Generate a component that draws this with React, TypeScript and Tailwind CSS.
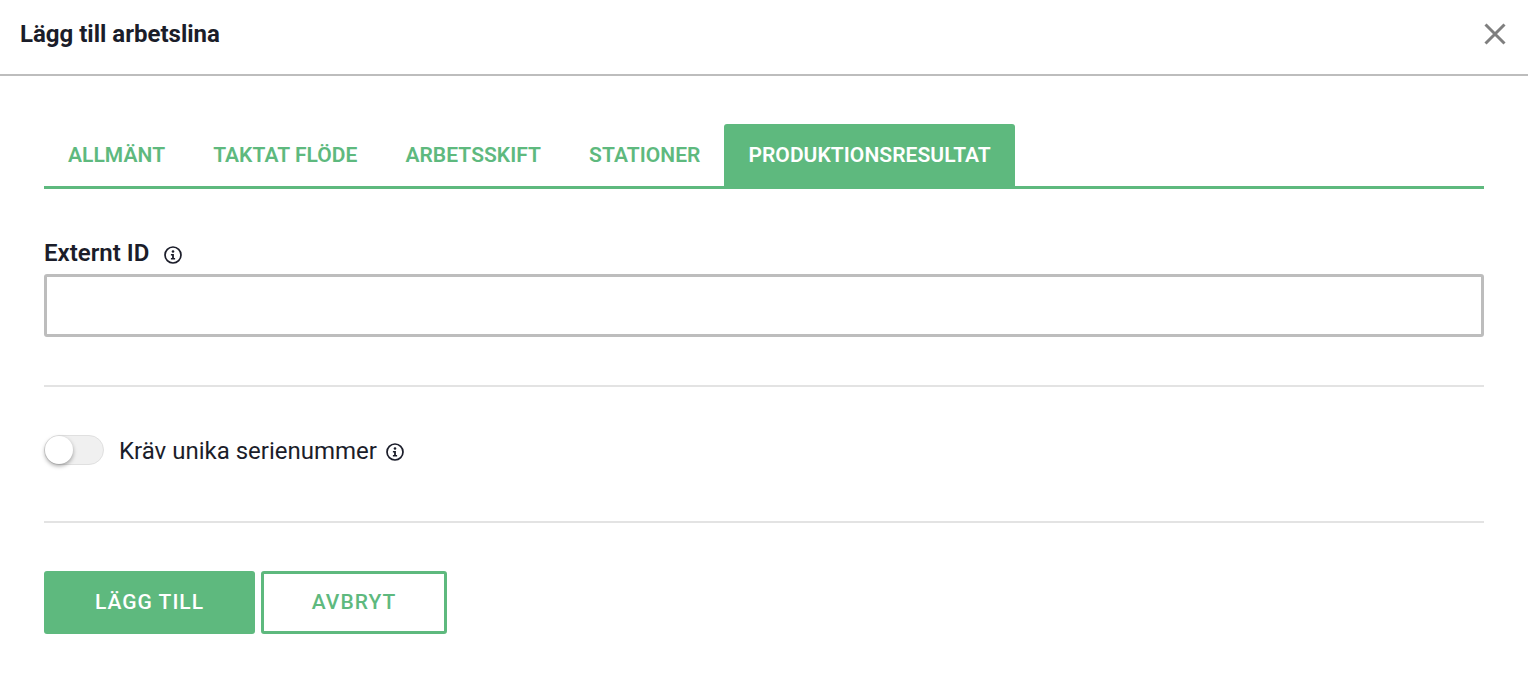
import React from "react";

function InfoIcon() {
  return (
    <svg width="18" height="18" viewBox="0 0 18 18" fill="none" className="block">
      <circle cx="9" cy="9" r="8" stroke="#1b1d2a" strokeWidth="1.7" />
      <circle cx="9" cy="5.5" r="1.3" fill="#1b1d2a" />
      <path d="M6.9 7.9h3v4.2h1.2v1.5H6.9v-1.5h1.2V9.4H6.9z" fill="#1b1d2a" />
    </svg>
  );
}

export default function App() {
  const tabs = ["ALLMÄNT", "TAKTAT FLÖDE", "ARBETSSKIFT", "STATIONER"];
  return (
    <div className="h-[678px] w-[1528px] overflow-hidden bg-white font-['Roboto',sans-serif] text-[#1b1d2a]">
      <header className="flex h-[76px] items-center justify-between border-b-2 border-[#bdbdbd] pb-1.5 pl-5 pr-[22px]">
        <h1 className="text-[24px] font-bold leading-8">Lägg till arbetslina</h1>
        <svg width="22" height="22" viewBox="0 0 22 22" fill="none">
          <path d="M1.5 1.5l19 19M20.5 1.5l-19 19" stroke="#7f7f7f" strokeWidth="3" />
        </svg>
      </header>

      <main className="px-11 pt-12">
        <nav className="flex h-[65px] border-b-[3px] border-[#5eb97e]">
          {tabs.map((t) => (
            <div key={t} className="flex h-[62px] items-center px-6 pt-0.5 text-[21px] font-semibold tracking-[0.05px] text-[#5eb97e]">
              {t}
            </div>
          ))}
          <div className="flex h-[62px] items-center rounded-t-[3px] bg-[#5eb97e] px-6 pt-0.5 text-[21px] font-semibold tracking-[0.05px] text-white">
            PRODUKTIONSRESULTAT
          </div>
        </nav>

        <div className="mt-[45px] flex h-10 items-center">
          <label className="pb-0.5 text-[24px] font-semibold">Externt ID</label>
          <span className="ml-[15px] mt-0.5"><InfoIcon /></span>
        </div>
        <div className="h-[63px] rounded-[3px] border-[3px] border-[#bdbdbd]" />

        <hr className="mt-[48px] border-t-2 border-[#e3e3e3]" />

        <div className="mt-[47px] flex h-[32px] items-center">
          <div className="relative h-[30px] w-[60px] rounded-full border border-[#e0e0e0] bg-[#f0f0f0]">
            <span className="absolute left-0 top-0 size-7 rounded-full bg-white shadow-[0_2px_4px_rgba(0,0,0,0.35)]" />
          </div>
          <span className="ml-[15px] pt-0.5 text-[24px] leading-8">Kräv unika serienummer</span>
          <span className="ml-[9px] mt-1"><InfoIcon /></span>
        </div>

        <hr className="mt-[55px] border-t-2 border-[#e3e3e3]" />

        <div className="mt-[48px] flex gap-1.5">
          <button className="h-[63px] w-[211px] rounded-[3px] bg-[#5eb97e] text-[21px] font-medium tracking-[1px] text-white">
            LÄGG TILL
          </button>
          <button className="h-[63px] w-[186px] rounded-[3px] border-[3px] border-[#5eb97e] bg-white text-[21px] font-medium tracking-[1px] text-[#5eb97e]">
            AVBRYT
          </button>
        </div>
      </main>
    </div>
  );
}
